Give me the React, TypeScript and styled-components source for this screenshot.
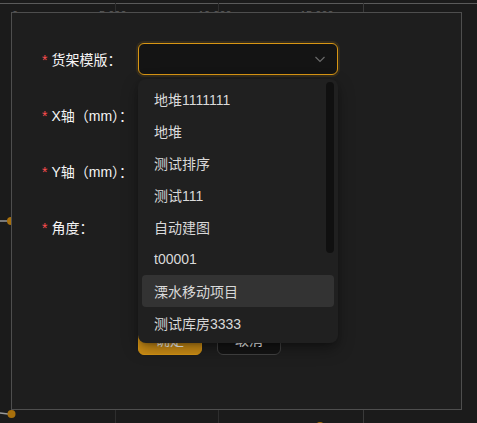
import React from "react";
import styled, { createGlobalStyle } from "styled-components";

const Global = createGlobalStyle`
  html, body { margin: 0; padding: 0; background: #1b1b1b; }
  body { font-family: "Liberation Sans", "Noto Sans CJK SC", sans-serif; }
`;

const Stage = styled.div`
  position: relative;
  width: 477px;
  height: 423px;
  overflow: hidden;
  background: #1b1b1b;
`;

const Chart = styled.svg`
  position: absolute;
  inset: 0;
`;

const Modal = styled.div`
  position: absolute;
  left: 11px;
  top: 12px;
  width: 451px;
  height: 398px;
  box-sizing: border-box;
  border: 1px solid #4e4e4e;
  background: #1e1e1e;
  padding: 30px 0 0 30px;
  display: flex;
  flex-direction: column;
`;

const Row = styled.div`
  position: relative;
  display: flex;
  align-items: center;
  height: 32px;
  margin-bottom: 24px;
`;

const Label = styled.label`
  width: 96px;
  flex: none;
  display: flex;
  align-items: center;
  font-size: 14px;
  color: #f5f5f5;
  white-space: nowrap;
`;

const Star = styled.span`
  color: #ff4d4f;
  font-family: "Liberation Sans", sans-serif;
  font-size: 14px;
  margin-right: 4px;
  position: relative;
  top: 1px;
`;

const Select = styled.div`
  position: relative;
  width: 200px;
  height: 32px;
  box-sizing: border-box;
  border: 1px solid #d89614;
  border-radius: 6px;
  background: #141414;
  box-shadow: 0 0 0 2px rgba(216, 150, 20, 0.12);
  display: flex;
  align-items: center;
  justify-content: flex-end;
  padding-right: 11px;
`;

const Dropdown = styled.div`
  position: absolute;
  left: 96px;
  top: 36px;
  width: 200px;
  height: 264px;
  box-sizing: border-box;
  padding: 4px;
  background: #202020;
  border-radius: 8px;
  box-shadow: 0 6px 16px rgba(0, 0, 0, 0.35), 0 3px 6px -4px rgba(0, 0, 0, 0.5);
  z-index: 5;
  overflow: hidden;
`;

const Item = styled.div<{ $active?: boolean }>`
  height: 32px;
  padding: 0 12px;
  display: flex;
  align-items: center;
  border-radius: 4px;
  font-size: 14px;
  color: #d9d9d9;
  background: ${(p) => (p.$active ? "#333333" : "transparent")};
`;

const Thumb = styled.div`
  position: absolute;
  right: 4px;
  top: 3px;
  width: 8px;
  height: 171px;
  border-radius: 4px;
  background: #101010;
`;

const Buttons = styled.div`
  display: flex;
  gap: 15px;
  margin-top: 56px;
  margin-left: 96px;
`;

const Button = styled.button<{ $primary?: boolean }>`
  width: 64px;
  height: 32px;
  box-sizing: border-box;
  border-radius: 6px;
  font-family: inherit;
  font-size: 14px;
  border: 1px solid ${(p) => (p.$primary ? "#d89614" : "#424242")};
  background: ${(p) => (p.$primary ? "#cd8e16" : "#141414")};
  color: #fff;
`;

const items = [
  "地堆1111111",
  "地堆",
  "测试排序",
  "测试111",
  "自动建图",
  "t00001",
  "溧水移动项目",
  "测试库房3333",
];

export default function App() {
  return (
    <Stage>
      <Global />
      <Chart width="477" height="423" viewBox="0 0 477 423">
        <line x1="0" y1="3.5" x2="477" y2="3.5" stroke="#5a5a5a" strokeWidth="1" />
        <line x1="363.5" y1="3" x2="363.5" y2="423" stroke="#3a3a3a" strokeWidth="1" />
        <line x1="115.5" y1="3" x2="115.5" y2="423" stroke="#2e2e2e" strokeWidth="1" />
        <line x1="218.5" y1="3" x2="218.5" y2="423" stroke="#2e2e2e" strokeWidth="1" />
        <g fill="#5c5c5c" fontSize="11" fontFamily="Liberation Sans, sans-serif">
          <text x="12" y="19">0</text>
          <text x="99" y="19">5,000</text>
          <text x="198" y="19">10,000</text>
          <text x="300" y="19">15,000</text>
        </g>
        <line x1="0" y1="221" x2="8" y2="221" stroke="#9a9a9a" strokeWidth="1.5" />
        <circle cx="11" cy="221" r="4" fill="#a8700c" />
        <line x1="0" y1="413" x2="8" y2="414" stroke="#9a9a9a" strokeWidth="1.5" />
        <circle cx="11.5" cy="414" r="4" fill="#a8700c" />
        <circle cx="320" cy="426" r="4" fill="#a8700c" />
      </Chart>
      <Modal>
        <Row>
          <Label>
            <Star>*</Star>货架模版：
          </Label>
          <Select>
            <svg width="12" height="12" viewBox="0 0 12 12">
              <path d="M1.5 4 L6 8.5 L10.5 4" fill="none" stroke="#6a6a6a" strokeWidth="1.2" />
            </svg>
          </Select>
          <Dropdown>
            {items.map((t, i) => (
              <Item key={t} $active={i === 6}>
                {t}
              </Item>
            ))}
            <Thumb />
          </Dropdown>
        </Row>
        <Row>
          <Label>
            <Star>*</Star>X轴（mm）：
          </Label>
        </Row>
        <Row>
          <Label>
            <Star>*</Star>Y轴（mm）：
          </Label>
        </Row>
        <Row>
          <Label>
            <Star>*</Star>角度：
          </Label>
        </Row>
        <Buttons>
          <Button $primary>确定</Button>
          <Button>取消</Button>
        </Buttons>
      </Modal>
    </Stage>
  );
}
